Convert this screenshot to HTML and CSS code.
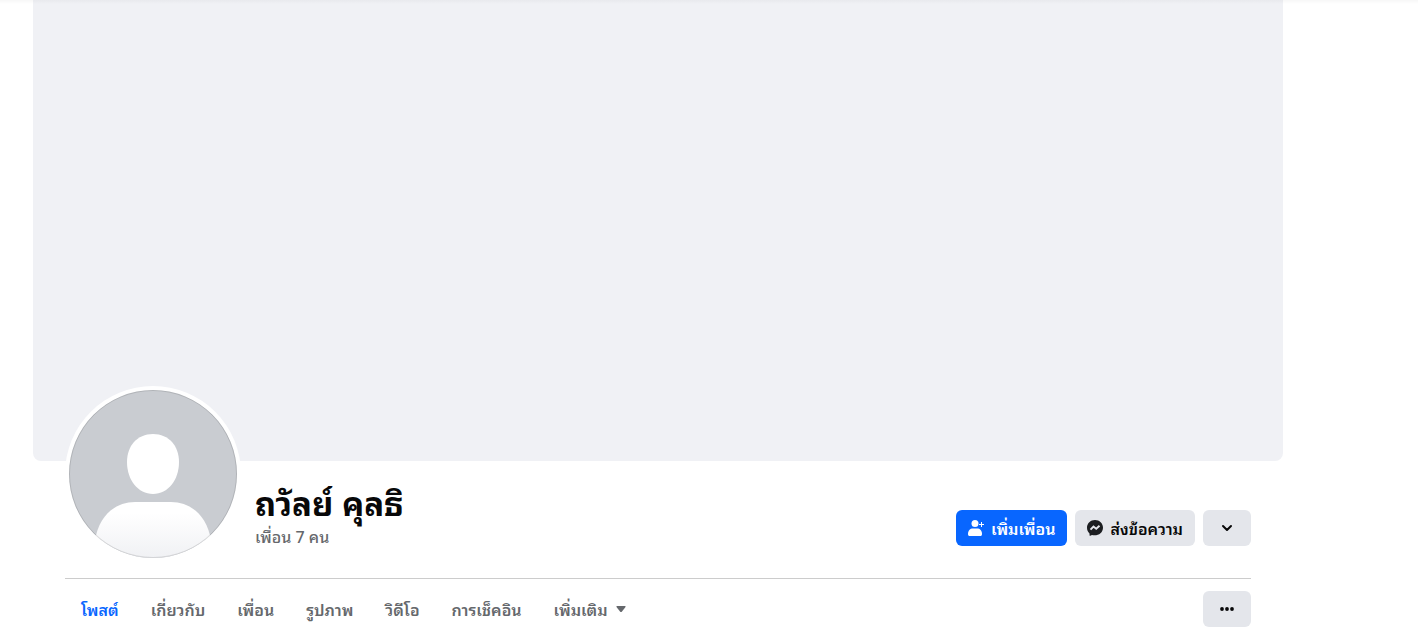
FILE: index.html
```html
<!DOCTYPE html>
<html lang="th">
<head>
<meta charset="utf-8">
<meta name="viewport" content="width=device-width, initial-scale=1">
<title>ถวัลย์ คุลธิ</title>
<link rel="stylesheet" href="styles.css">
</head>
<body>
<main class="profile">
  <div class="cover"></div>
  <div class="content">
    <header class="summary">
      <svg class="avatar" viewBox="0 0 176 176" role="img" aria-label="ถวัลย์ คุลธิ">
        <defs>
          <clipPath id="round"><circle cx="88" cy="88" r="84"/></clipPath>
          <linearGradient id="body" x1="0" y1="116" x2="0" y2="172" gradientUnits="userSpaceOnUse"><stop offset=".2" stop-color="#fff"/><stop offset="1" stop-color="#f0f1f4"/></linearGradient>
        </defs>
        <circle cx="88" cy="88" r="88" fill="#fff"/>
        <g clip-path="url(#round)">
          <rect width="176" height="176" fill="#c9ccd1"/>
          <path d="M88 48C104 48 114 60 114 76C114 94 103 108 88 108S62 94 62 76C62 60 72 48 88 48Z" fill="#fff"/>
          <path d="M30 176V154C34 130 50 116 70 116H106C126 116 142 130 146 154V176Z" fill="url(#body)"/>
        </g>
        <circle cx="88" cy="88" r="83.5" fill="none" stroke="#000" stroke-opacity=".12"/>
      </svg>
      <div class="identity">
        <h1 class="name">ถวัลย์ คุลธิ</h1>
        <a class="friends" href="#friends">เพื่อน 7 คน</a>
      </div>
      <div class="actions">
        <button class="button primary" type="button">
          <svg class="icon" viewBox="0 0 16 16" aria-hidden="true"><circle cx="7" cy="3.500" r="3.500"/><path d="M0 14C0 10.500 2 8.500 5 8.500H9C12 8.500 14 10.500 14 14C14 15.500 13.500 16 12 16H2C.5 16 0 15.500 0 14Z"/><path d="M13.500 2V7M11 4.500H16" fill="none" stroke="currentColor"/></svg>
          เพิ่มเพื่อน
        </button>
        <button class="button" type="button">
          <svg class="icon messenger" viewBox="0 0 16 16" aria-hidden="true"><path d="M8 0C3.500 0 0 3.300 0 7.700C0 10 1 12 2.500 13.400L2.600 15.400Q2.700 16 3.300 15.800L5 15C10.500 16.500 16 13 16 7.700C16 3.300 12.500 0 8 0Z"/><path d="M3.500 9.700L6.500 6.500L9.200 8.700L12.500 5.700" fill="none" stroke="#e4e6eb" stroke-width="1.900"/></svg>
          ส่งข้อความ
        </button>
        <button class="button square" type="button" aria-label="ดูเพิ่มเติม">
          <svg class="icon" viewBox="0 0 16 16" aria-hidden="true"><path d="M4 6L8 10L12 6" fill="none" stroke="currentColor" stroke-width="2" stroke-linecap="round" stroke-linejoin="round"/></svg>
        </button>
      </div>
    </header>
    <div class="toolbar">
      <nav class="tabs">
        <a class="tab active" href="#posts">โพสต์</a>
        <a class="tab" href="#about">เกี่ยวกับ</a>
        <a class="tab" href="#friends">เพื่อน</a>
        <a class="tab" href="#photos">รูปภาพ</a>
        <a class="tab" href="#videos">วิดีโอ</a>
        <a class="tab" href="#checkins">การเช็คอิน</a>
        <button class="tab" type="button">เพิ่มเติม<svg class="caret" viewBox="0 0 10 6" aria-hidden="true"><path d="M1 0H9Q10 0 9.500 1L6 5.500Q5 6.500 4 5.500L.5 1Q0 0 1 0Z"/></svg></button>
      </nav>
      <button class="button square" type="button" aria-label="ตัวเลือก">
        <svg class="icon" viewBox="0 0 16 16" aria-hidden="true"><circle cx="3" cy="8" r="1.900"/><circle cx="8" cy="8" r="1.900"/><circle cx="13" cy="8" r="1.900"/></svg>
      </button>
    </div>
  </div>
</main>
</body>
</html>
```
FILE: styles.css
```css
* { box-sizing: border-box; }
body {
  margin: 0;
  background: #fff;
  color: #080809;
  font-family: "Noto Sans Thai Looped", Loma, Waree, "Noto Sans Thai", "Noto Sans", sans-serif;
}
body::before {
  content: "";
  position: absolute;
  inset: 0 0 auto;
  height: 4px;
  background: linear-gradient(rgba(0, 0, 0, .03), transparent);
}
.profile {
  max-width: 1316px;
  padding: 0 33px;
}
.cover {
  height: 461px;
  border-radius: 0 0 8px 8px;
  background: #f0f1f5;
}
.content { padding: 0 32px; }
.summary {
  display: flex;
  align-items: flex-end;
  gap: 14px;
  margin-top: -75px;
  padding-bottom: 16px;
  border-bottom: 1px solid #ccc;
}
.avatar { position: relative; width: 176px; height: 176px; flex: none; }
.identity { flex: 1; padding-bottom: 16px; }
.name { margin: 0 0 5px; font-size: 33px; line-height: 38px; font-weight: 700; }
.friends { display: block; color: #65686c; font-size: 16px; line-height: 20px; font-weight: 500; text-decoration: none; }
.actions { display: flex; gap: 8px; padding-bottom: 16px; }
.button {
  display: flex;
  align-items: center;
  justify-content: center;
  gap: 7px;
  height: 36px;
  padding: 0 12px;
  border: 0;
  border-radius: 6px;
  background: #e4e6eb;
  color: #080809;
  font-family: inherit;
  font-size: 16px;
  line-height: 20px;
  font-weight: 600;
  white-space: nowrap;
}
.primary { background: #0866ff; color: #fff; }
.square { width: 48px; }
.icon { width: 16px; height: 16px; fill: currentColor; flex: none; }
.messenger { color: #1c1e21; }
.toolbar { display: flex; align-items: center; justify-content: space-between; height: 60px; }
.tabs { display: flex; }
.tab {
  display: flex;
  align-items: center;
  gap: 8px;
  padding: 0 16px;
  border: 0;
  background: none;
  color: #65686c;
  font-family: inherit;
  font-size: 16px;
  line-height: 60px;
  font-weight: 600;
  text-decoration: none;
  white-space: nowrap;
}
.active { color: #0866ff; }
.caret { width: 10px; height: 6px; fill: currentColor; }
```
